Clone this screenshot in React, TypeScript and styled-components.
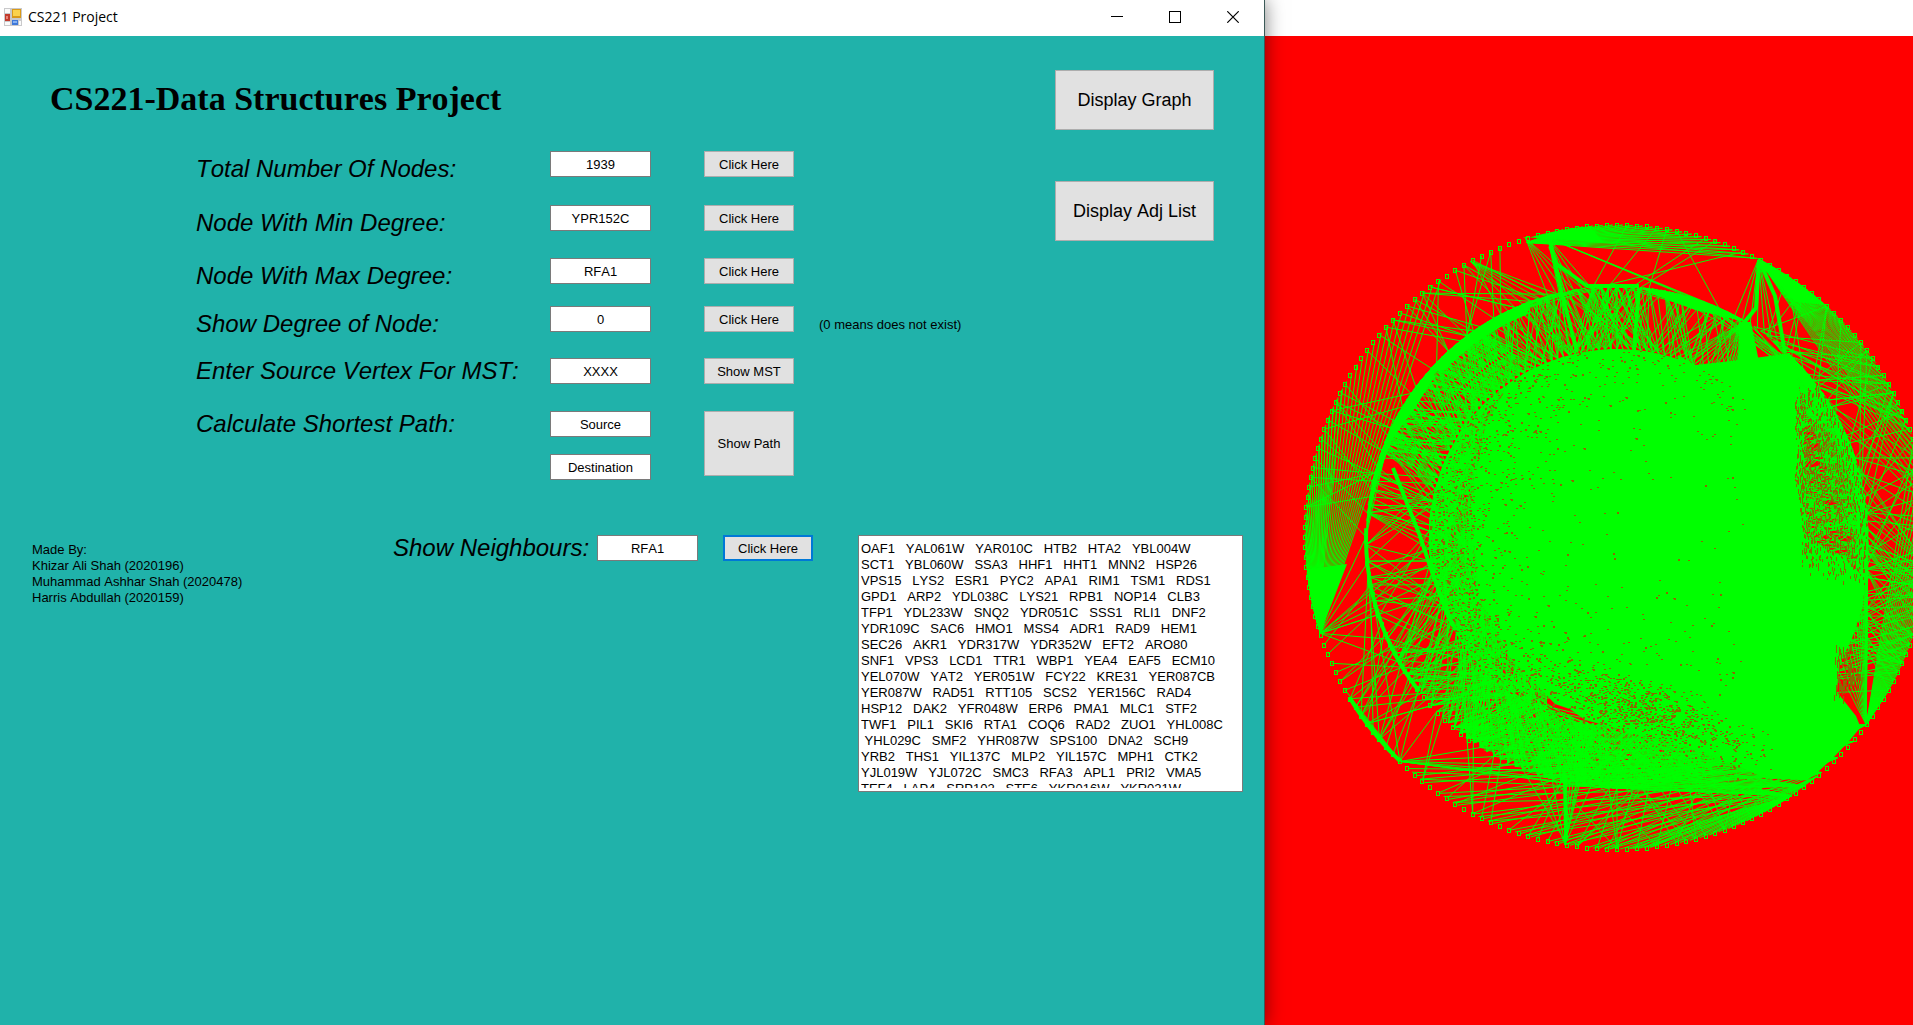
import React from "react";
import styled, { createGlobalStyle, css } from "styled-components";

const GlobalStyle = createGlobalStyle`
  * { box-sizing: border-box; }
  html, body { margin: 0; padding: 0; background: #ffffff; }
  body, button, input, textarea {
    font-family: "Liberation Sans", Arial, sans-serif;
    font-size: 13px;
    font-kerning: none;
    color: #000000;
  }
`;

const Desktop = styled.div`
  display: grid;
  grid-template-columns: minmax(0, 1265fr) minmax(0, 648fr);
  min-height: 100vh;
  overflow: hidden;
`;

const AppWindow = styled.main`
  display: flex;
  flex-direction: column;
  background: #20b2aa;
  border-right: 1px solid #3c5a58;
  box-shadow: 0 0 18px rgba(0, 0, 0, 0.5);
  z-index: 1;
`;

const TitleBar = styled.header`
  display: flex;
  align-items: center;
  height: 36px;
  padding: 0 2px 2px 4px;
  background: #ffffff;
`;

const Caption = styled.span`
  flex: 1;
  padding-left: 6px;
  font-family: "Open Sans", "Noto Sans", sans-serif;
  font-size: 14px;
  line-height: 20px;
`;

const CaptionButton = styled.button`
  display: flex;
  align-items: center;
  justify-content: center;
  width: 58px;
  height: 34px;
  padding: 0;
  border: 0;
  background: transparent;
`;

const Client = styled.div`
  flex: 1;
  padding: 34px 21px 0 32px;
`;

const TopArea = styled.div`
  display: flex;
  justify-content: space-between;
  padding-right: 29px;
`;

const Heading = styled.h1`
  margin: 8px 0 31px 18px;
  font-family: "Liberation Serif", "Times New Roman", serif;
  font-size: 34px;
  font-weight: 700;
  line-height: 42px;
`;

const QueryGrid = styled.form`
  display: grid;
  grid-template-columns: 354px 154px 115px auto;
  grid-template-rows: 54px 53px 48px 52px 53px auto;
  padding-left: 164px;
  align-items: start;
`;

const FieldLabel = styled.label<{ $low?: boolean }>`
  padding-top: ${(p) => (p.$low ? 5 : 0)}px;
  font-size: 24px;
  font-style: italic;
  line-height: 26px;
  white-space: nowrap;
`;

const Note = styled.span`
  padding-top: 11px;
  line-height: 16px;
  white-space: nowrap;
`;

const Field = styled.input`
  display: block;
  width: 101px;
  height: 26px;
  padding: 0 2px;
  border: 1px solid #7a7a7a;
  border-radius: 0;
  background: #ffffff;
  text-align: center;
`;

const FieldStack = styled.div`
  display: flex;
  flex-direction: column;
  gap: 17px;
`;

const Button = styled.button<{ $tall?: boolean; $active?: boolean }>`
  width: 90px;
  height: ${(p) => (p.$tall ? 65 : 26)}px;
  padding: 0;
  border: 1px solid #adadad;
  border-radius: 0;
  background: #e1e1e1;
  ${(p) =>
    p.$active &&
    css`
      border: 2px solid #0078d7;
    `}
`;

const DisplayButtons = styled.div`
  display: flex;
  flex-direction: column;
  gap: 51px;
`;

const DisplayButton = styled.button`
  width: 159px;
  height: 60px;
  border: 1px solid #adadad;
  border-radius: 0;
  background: #e1e1e1;
  font-size: 18px;
`;

const BottomArea = styled.div`
  display: grid;
  grid-template-columns: 361px 1fr 385px;
  align-items: start;
  margin-top: 55px;
`;

const Credits = styled.p`
  margin: 7px 0 0;
  line-height: 16px;
`;

const NeighbourForm = styled.form`
  display: grid;
  grid-template-columns: 204px 126px 90px;
  align-items: center;
`;

const OutputFrame = styled.div`
  height: 257px;
  padding: 1px 2px 3px;
  border: 1px solid #7a7a7a;
  background: #ffffff;
`;

const Output = styled.textarea`
  display: block;
  width: 100%;
  height: 100%;
  padding: 4px 0 0;
  border: 0;
  background: #ffffff;
  line-height: 16px;
  white-space: pre;
  overflow: hidden;
  resize: none;
`;

const GraphWindow = styled.section`
  display: flex;
  flex-direction: column;
  background: #ff0000;
`;

const GraphTitleBar = styled.header`
  height: 36px;
  background: #ffffff;
`;

const GraphSvg = styled.svg`
  flex: 1;
  display: block;
  width: 100%;
  min-height: 0;
`;

const neighbours = [
  ["OAF1", "YAL061W", "YAR010C", "HTB2", "HTA2", "YBL004W"],
  ["SCT1", "YBL060W", "SSA3", "HHF1", "HHT1", "MNN2", "HSP26"],
  ["VPS15", "LYS2", "ESR1", "PYC2", "APA1", "RIM1", "TSM1", "RDS1"],
  ["GPD1", "ARP2", "YDL038C", "LYS21", "RPB1", "NOP14", "CLB3"],
  ["TFP1", "YDL233W", "SNQ2", "YDR051C", "SSS1", "RLI1", "DNF2"],
  ["YDR109C", "SAC6", "HMO1", "MSS4", "ADR1", "RAD9", "HEM1"],
  ["SEC26", "AKR1", "YDR317W", "YDR352W", "EFT2", "ARO80"],
  ["SNF1", "VPS3", "LCD1", "TTR1", "WBP1", "YEA4", "EAF5", "ECM10"],
  ["YEL070W", "YAT2", "YER051W", "FCY22", "KRE31", "YER087CB"],
  ["YER087W", "RAD51", "RTT105", "SCS2", "YER156C", "RAD4"],
  ["HSP12", "DAK2", "YFR048W", "ERP6", "PMA1", "MLC1", "STF2"],
  ["TWF1", "PIL1", "SKI6", "RTA1", "COQ6", "RAD2", "ZUO1", "YHL008C"],
  [" YHL029C", "SMF2", "YHR087W", "SPS100", "DNA2", "SCH9"],
  ["YRB2", "THS1", "YIL137C", "MLP2", "YIL157C", "MPH1", "CTK2"],
  ["YJL019W", "YJL072C", "SMC3", "RFA3", "APL1", "PRI2", "VMA5"],
  ["TEF4", "LAP4", "SRP102", "STE6", "YKR016W", "YKR021W"],
]
  .map((line) => line.join("   "))
  .join("\n");

/* ---- graph drawing: three concentric rings of nodes joined by edges ---- */

type Point = [number, number];

const CX = 352;
const CY = 501;
const OUTER = 312;
const MIDDLE = 251;
const INNER = 188;
const STEP = 360 / 196;

const at = (r: number, deg: number): Point => {
  const a = (deg * Math.PI) / 180;
  return [CX + r * Math.cos(a), CY + r * Math.sin(a)];
};

const fmt = ([x, y]: Point) => `${x.toFixed(1)} ${y.toFixed(1)}`;
const seg = (a: Point, b: Point) => `M${fmt(a)}L${fmt(b)}`;
const trail = (pts: Point[]) => `M${pts.map(fmt).join("L")}`;
const poly = (pts: Point[]) => `${trail(pts)}Z`;

const arc = (r: number, from: number, to: number): Point[] => {
  const n = Math.max(2, Math.ceil(Math.abs(to - from) / 3));
  return Array.from({ length: n + 1 }, (_, i) => at(r, from + ((to - from) * i) / n));
};

const fan = (hub: Point, r: number, from: number, to: number, step = STEP) => {
  let d = "";
  for (let a = from; a <= to; a += step) d += seg(hub, at(r, a));
  return d;
};

function makeRandom(seed: number) {
  let s = seed;
  return () => {
    s = (s + 0x6d2b79f5) | 0;
    let t = Math.imul(s ^ (s >>> 15), 1 | s);
    t = (t + Math.imul(t ^ (t >>> 7), 61 | t)) ^ t;
    return ((t ^ (t >>> 14)) >>> 0) / 4294967296;
  };
}

function buildGraph() {
  const rnd = makeRandom(221);
  const between = (a: number, b: number) => a + (b - a) * rnd();
  const snap = (deg: number) => Math.round(deg / STEP) * STEP;
  const links = (count: number, r1: number, a0: number, a1: number, r2: number, b0: number, b1: number, spread?: number) => {
    let d = "";
    for (let i = 0; i < count; i++) {
      const a = snap(between(a0, a1));
      const b = spread === undefined ? between(b0, b1) : a + between(-spread, spread);
      d += seg(at(r1, a), at(r2, snap(b)));
    }
    return d;
  };

  // disc in the centre and its corner towards the upper right hub
  let solid = poly([...arc(INNER, -125, 90), [290, 668], [245, 622], [214, 560], [206, 470], [220, 390]]);
  solid += poly([[413, 319], [430, 329], [475, 324], [525, 317], [534, 350], [539, 400], [542, 500], [400, 500]]);
  // mass running down to the lower right hubs
  const mass = poly([
    [541, 500], [580, 522], [600, 545], [598, 570], [588, 600], [574, 630], [572, 656], [591, 680],
    ...arc(OUTER - 3, 38, 52), [500, 742], [440, 716], [380, 700], [320, 684], [280, 655], [420, 500],
  ]);
  // crescents
  solid += poly([[258, 201], ...arc(OUTER, -107, -95), [338, 206], [285, 203]]);
  solid += poly([at(OUTER, -63), ...arc(OUTER, -63, -48), [530, 266]]);
  solid += poly([at(OUTER, 162), ...arc(OUTER, 163, 174), [82, 528]]);
  solid += poly([...arc(MIDDLE, 180, 222), [170, 340], [150, 372], [128, 402], [113, 440]]);
  solid += poly([...arc(MIDDLE, 222, 250), ...arc(MIDDLE - 11, 248, 224)]);
  solid += poly([...arc(MIDDLE, -85, -59), [430, 274], [390, 259]]);
  solid += poly([...arc(MIDDLE, -47, -12), ...arc(MIDDLE - 9, -14, -42)]);
  // wedge hanging from the top right hub of the middle ring
  solid += poly([[474, 286], [486, 286], [494, 326], [473, 326]]);

  let edges = "";
  // outer ring fans
  for (const a of [-107, -103]) edges += fan(at(OUTER - 4, a), OUTER, -100, -63);
  edges += fan(at(OUTER, -63), OUTER, -62, -4) + fan(at(OUTER - 4, -62), OUTER, -56, -12);
  edges += fan(at(OUTER, 162), OUTER, 164, 237) + fan(at(OUTER, 164), OUTER, 168, 210, STEP);
  edges += fan(at(OUTER, 148), OUTER, 135, 148) + fan(at(OUTER, 134), OUTER, 136, 152);
  // top left
  edges += links(16, OUTER, -134, -107, MIDDLE, -128, -104);
  edges += links(34, OUTER, -175, -125, MIDDLE, 0, 0, 12);
  edges += fan(at(OUTER, -118), MIDDLE, -114, -104, 2) + fan(at(OUTER, -107), MIDDLE, -106, -98, 2);
  edges += fan(at(OUTER - 5, -103), INNER, -104, -98, 2) + fan(at(OUTER - 5, -103), MIDDLE, -102, -96, 2);
  edges += fan(at(OUTER - 5, -103), MIDDLE, -66, -58, 3);
  edges += links(7, OUTER, -98, -66, MIDDLE, -96, -62);
  // top right
  edges += fan(at(OUTER, -63), MIDDLE, -62, -50, 2);
  edges += links(24, OUTER, -60, -20, MIDDLE, -56, -30);
  edges += links(60, OUTER, -40, 8, MIDDLE, 0, 0, 24);
  edges += fan(at(OUTER, 37), OUTER, -18, 30, STEP) + fan(at(OUTER, 37), MIDDLE, -10, 30, 2);
  edges += links(80, OUTER, 4, 30, MIDDLE, 0, 0, 14);
  // middle ring, upper half
  edges += fan(at(MIDDLE, -59), MIDDLE, -90, -62, 2) + fan(at(MIDDLE, -59), INNER, -72, -48, 1.5);
  edges += fan(at(MIDDLE, -47), MIDDLE, -45, 10, 1.5);
  edges += links(54, MIDDLE, -84, -58, INNER, 0, 0, 15);
  edges += links(80, MIDDLE, -104, -84, INNER, -106, -76);
  edges += links(90, MIDDLE, -128, -102, INNER, 0, 0, 12);
  edges += links(270, MIDDLE, 200, 238, INNER, 0, 0, 13);
  edges += links(120, MIDDLE, 204, 250, MIDDLE, 0, 0, 26);
  edges += links(360, MIDDLE, -44, 22, INNER, 0, 0, 14);
  edges += links(150, MIDDLE, -44, 20, MIDDLE, 0, 0, 40);
  // left half of the disc, seen as a dense weave
  for (let i = 0; i < 640; i++) {
    const a = snap(between(112, 246));
    edges += seg(at(INNER, a), [between(200, 300), CY + between(-150, 150) * 0.7 + INNER * 0.4 * Math.sin((a * Math.PI) / 180)]);
  }
  edges += links(120, INNER, 110, 235, INNER, 0, 0, 60);
  // lower left
  edges += links(26, MIDDLE, 182, 198, INNER, 0, 0, 9);
  edges += links(34, MIDDLE, 150, 182, INNER, 0, 0, 22);
  edges += links(110, MIDDLE, 122, 152, INNER, 0, 0, 20);
  edges += links(240, MIDDLE, 92, 132, INNER, 0, 0, 24);
  edges += links(360, MIDDLE, 30, 100, INNER, 0, 0, 30);
  edges += fan(at(OUTER, 162), MIDDLE, 150, 182, 6) + fan(at(OUTER, 162), INNER, 162, 178, 5);
  edges += links(20, OUTER, 134, 160, MIDDLE, 136, 178);
  edges += links(12, OUTER, 134, 156, INNER, 150, 172);
  // edges converging on the lower right hubs
  for (const a of [37, 41, 45, 49, 53, 56]) {
    edges += fan(at(OUTER, a), MIDDLE, 86 + (a % 4), 132, 4);
    edges += fan(at(OUTER, a), OUTER, 84 + (a % 5), 134, STEP * 4);
  }
  edges += fan(at(OUTER, 56), OUTER, 60, 92, STEP) + fan(at(OUTER, 50), OUTER, 58, 84, STEP * 2);
  edges += fan(at(OUTER, 99.6), MIDDLE, 96, 108, 3) + fan(at(OUTER, 99.6), INNER, 97, 104, 2);
  edges += links(40, OUTER, 62, 128, MIDDLE, 0, 0, 14);
  edges += fan(at(OUTER, 134), MIDDLE, 95, 125, 4);

  let thick = "";
  thick += trail([[285, 204], [296, 254], [312, 316]]);
  thick += trail([[285, 210], [292, 228], [322, 250], [374, 250]]);
  thick += trail([[374, 252], [369, 314]]);
  thick += trail([[494, 224], [491, 272], [478, 288]]);
  thick += trail([[494, 224], [510, 260], [520, 317]]);
  thick += trail([[128, 432], [155, 500], [169, 542], [188, 590]]);
  thick += trail([...arc(MIDDLE, 182, 142)]);
  thick += trail([...arc(OUTER, 149, 134)]);
  thick += trail([[301, 804], [300, 740]]);

  let nodes = "";
  const node = (r: number, deg: number) => {
    const [x, y] = at(r, deg);
    nodes += `M${Math.round(x) - 2} ${Math.round(y) - 2}h3v4h-3z`;
  };
  for (let i = 0; i < 196; i++) node(OUTER, i * STEP);
  for (let a = 126; a < 176; a += 2.4) node(MIDDLE, a);

  // pinholes where the background still shows through the mass of edges
  let holes = "";
  const hole = (x: number, y: number) => {
    holes += `M${Math.round(x)} ${Math.round(y)}h${rnd() < 0.3 ? 3 : 2}v${rnd() < 0.25 ? 2 : 1}h-2z`;
  };
  for (let i = 0; i < 9000; i++) {
    const [x, y] = at(INNER * Math.sqrt(rnd()), between(0, 360));
    const edge = Math.hypot(x - CX - 60, y - CY + 5) / 245;
    if (x < CX + 130 && rnd() < 0.015 + 0.7 * Math.pow(edge, 4)) hole(x, y);
  }
  for (let i = 0; i < 800; i++) {
    const x = 380 + 130 * (rnd() + rnd() - 1);
    hole(x, 640 + (x - 290) * 0.38 + 34 * (rnd() + rnd() - 1));
  }
  for (let i = 0; i < 1300; i++) {
    const [x, y] = at(between(INNER - 3, MIDDLE), between(-38, 4 + 8 * rnd()));
    if (x > 530) holes += `M${Math.round(x)} ${Math.round(y)}h1v${2 + Math.floor(rnd() * 3)}h-1z`;
  }
  for (let i = 0; i < 70; i++) {
    const x = 580 + 18 * (rnd() + rnd() - 1);
    holes += `M${Math.round(x)} ${Math.round(636 + 34 * (rnd() + rnd() - 1))}h1v${3 + Math.floor(rnd() * 8)}h-1z`;
  }
  return { solid: solid, mass, edges, thick, nodes, holes };
}

const graph = buildGraph();

const FormIcon = () => (
  <svg width="18" height="18" viewBox="0 0 18 18" aria-hidden="true">
    <rect width="18" height="18" fill="#c9c9cb" />
    <rect x="1" y="1" width="5" height="4" fill="#fafafa" />
    <rect x="1" y="14" width="5" height="3" fill="#fafafa" />
    <rect x="15" y="13" width="2" height="4" fill="#fafafa" />
    <rect x="1" y="6" width="5" height="7" fill="#c23a2c" />
    <rect x="2" y="8" width="2" height="3" fill="#e98478" />
    <rect x="8" y="1" width="9" height="9" fill="#d99a1a" />
    <rect x="9" y="2" width="7" height="6" fill="#fbd24c" />
    <rect x="8" y="12" width="6" height="5" fill="#3f78d8" />
    <rect x="9" y="13" width="4" height="2" fill="#86b2f4" />
  </svg>
);

const rows = [
  { id: "total", label: "Total Number Of Nodes:", value: "1939", action: "Click Here", low: true },
  { id: "min", label: "Node With Min Degree:", value: "YPR152C", action: "Click Here", low: true },
  { id: "max", label: "Node With Max Degree:", value: "RFA1", action: "Click Here", low: true },
  { id: "degree", label: "Show Degree of Node:", value: "0", action: "Click Here", low: true, note: "(0 means does not exist)" },
  { id: "mst", label: "Enter Source Vertex For MST:", value: "XXXX", action: "Show MST", low: false },
];

export default function App() {
  return (
    <>
      <GlobalStyle />
      <Desktop>
        <AppWindow>
          <TitleBar>
            <FormIcon />
            <Caption>CS221 Project</Caption>
            <CaptionButton type="button" aria-label="Minimize">
              <svg width="12" height="12" viewBox="0 0 12 12">
                <path d="M0 5.5h12" stroke="#000" />
              </svg>
            </CaptionButton>
            <CaptionButton type="button" aria-label="Maximize">
              <svg width="12" height="12" viewBox="0 0 12 12" shapeRendering="crispEdges">
                <path d="M.5.5h11v11H.5z" fill="none" stroke="#000" />
              </svg>
            </CaptionButton>
            <CaptionButton type="button" aria-label="Close">
              <svg width="12" height="12" viewBox="0 0 12 12">
                <path d="M.3.3l11.4 11.4M11.7.3L.3 11.7" stroke="#000" strokeWidth="1.2" />
              </svg>
            </CaptionButton>
          </TitleBar>
          <Client>
            <TopArea>
              <div>
                <Heading>CS221-Data Structures Project</Heading>
                <QueryGrid onSubmit={(e) => e.preventDefault()}>
                  {rows.map((row) => (
                    <React.Fragment key={row.id}>
                      <FieldLabel htmlFor={row.id} $low={row.low}>
                        {row.label}
                      </FieldLabel>
                      <Field id={row.id} defaultValue={row.value} />
                      <Button type="button">{row.action}</Button>
                      {row.note ? <Note>{row.note}</Note> : <span />}
                    </React.Fragment>
                  ))}
                  <FieldLabel htmlFor="source">Calculate Shortest Path:</FieldLabel>
                  <FieldStack>
                    <Field id="source" defaultValue="Source" />
                    <Field aria-label="Destination vertex" defaultValue="Destination" />
                  </FieldStack>
                  <Button type="button" $tall>
                    Show Path
                  </Button>
                </QueryGrid>
              </div>
              <DisplayButtons>
                <DisplayButton type="button">Display Graph</DisplayButton>
                <DisplayButton type="button">Display Adj List</DisplayButton>
              </DisplayButtons>
            </TopArea>
            <BottomArea>
              <Credits>
                Made By:
                <br />
                Khizar Ali Shah (2020196)
                <br />
                Muhammad Ashhar Shah (2020478)
                <br />
                Harris Abdullah (2020159)
              </Credits>
              <NeighbourForm onSubmit={(e) => e.preventDefault()}>
                <FieldLabel htmlFor="neighbours">Show Neighbours:</FieldLabel>
                <Field id="neighbours" defaultValue="RFA1" />
                <Button type="button" $active>
                  Click Here
                </Button>
              </NeighbourForm>
              <OutputFrame>
                <Output aria-label="Neighbours" readOnly defaultValue={neighbours} />
              </OutputFrame>
            </BottomArea>
          </Client>
        </AppWindow>
        <GraphWindow>
          <GraphTitleBar />
          <GraphSvg viewBox="0 0 648 989" preserveAspectRatio="xMinYMin slice" role="img" aria-label="Graph">
            <path d={graph.edges} stroke="#00ff00" fill="none" />
            <path d={graph.solid} fill="#00ff00" />
            <path d={graph.mass} fill="#00ff00" />
            <path d={graph.holes} fill="#8a6a00" shapeRendering="crispEdges" />
            <path d={graph.thick} stroke="#00ff00" strokeWidth="4" fill="none" />
            <path d={graph.nodes} stroke="#00ff00" fill="none" shapeRendering="crispEdges" />
          </GraphSvg>
        </GraphWindow>
      </Desktop>
    </>
  );
}
